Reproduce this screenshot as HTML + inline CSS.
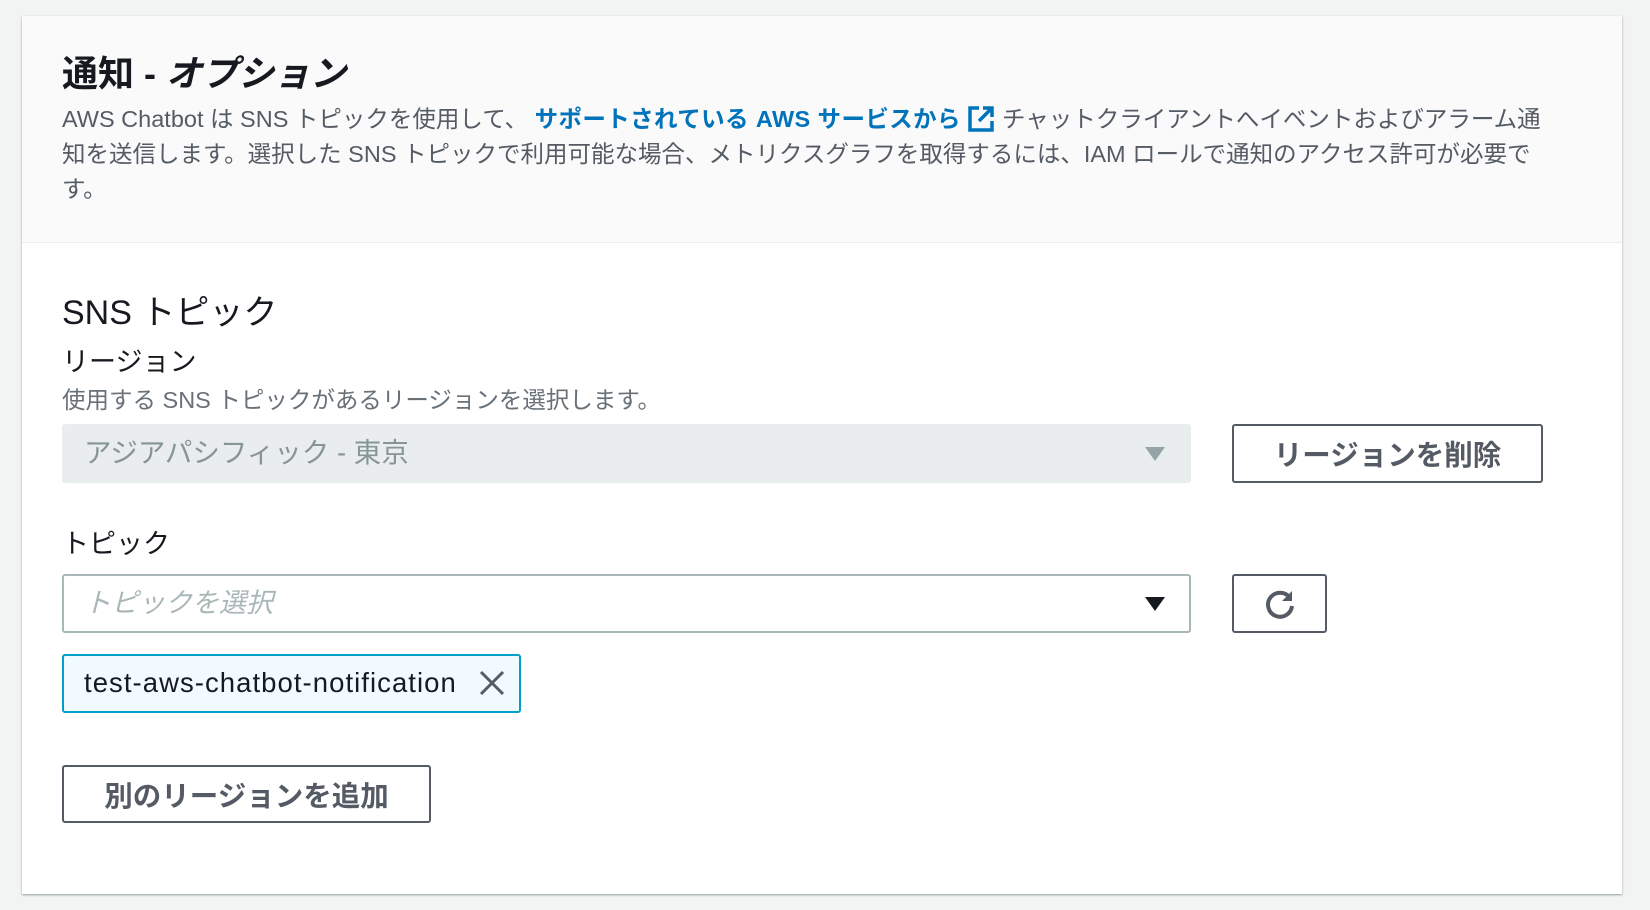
<!DOCTYPE html>
<html><head><meta charset="utf-8"><style>
*{box-sizing:border-box;margin:0;padding:0}
body{width:1650px;height:910px;background:#f2f3f3;font-family:"Liberation Sans","Noto Sans CJK JP",sans-serif;color:#16191f;position:relative;overflow:hidden}
.card{position:absolute;left:22px;top:16px;width:1600px;height:878px;background:#fff;box-shadow:0 1px 2px rgba(0,28,36,.4)}
.hdr{position:absolute;left:0;top:0;width:1600px;height:227px;background:#fafafa;border-bottom:1px solid #eaeded}
.abs{position:absolute;white-space:nowrap}
.btn{position:absolute;border:2px solid #545b64;border-radius:3px;background:#fff;color:#545b64;font-weight:bold;font-size:28.5px;display:flex;align-items:center;justify-content:center}
</style></head><body>
<div class="card">
<div class="hdr">
<div class="abs" style="left:40px;top:35px;font-size:36px;font-weight:bold;line-height:46px">通知 - <i>オプション</i></div>
<div class="abs" style="left:40px;top:86px;width:1488px;white-space:normal;font-size:23.5px;line-height:35px;color:#545b64">AWS Chatbot は SNS トピックを使用して、 <b style="color:#0073bb;letter-spacing:0.4px">サポートされている AWS サービスから</b> <svg width="28" height="28" viewBox="0 0 28 28" style="vertical-align:-6px"><path d="M12 3H3v22h22v-9" fill="none" stroke="#0073bb" stroke-width="3.5"/><path d="M16 3h9v9M25 3L12 16" fill="none" stroke="#0073bb" stroke-width="3.5"/></svg> チャットクライアントへイベントおよびアラーム通知を送信します。選択した SNS トピックで利用可能な場合、メトリクスグラフを取得するには、IAM ロールで通知のアクセス許可が必要です。</div>
</div>
<div class="abs" style="left:40px;top:276px;font-size:34px;line-height:42px">SNS トピック</div>
<div class="abs" style="left:40px;top:329px;font-size:27px;line-height:34px">リージョン</div>
<div class="abs" style="left:40px;top:368px;font-size:23.5px;line-height:32px;color:#687078">使用する SNS トピックがあるリージョンを選択します。</div>
<div class="abs" style="left:40px;top:408px;width:1129px;height:59px;background:#eaeded;border-radius:3px"></div>
<div class="abs" style="left:62px;top:419px;font-size:27.5px;line-height:36px;color:#879596">アジアパシフィック - 東京</div>
<svg class="abs" style="left:1122px;top:430px" width="22" height="16"><path d="M1 1h20L11 15z" fill="#95a5a6"/></svg>
<div class="btn" style="left:1210px;top:408px;width:311px;height:59px">リージョンを削除</div>
<div class="abs" style="left:40px;top:510px;font-size:27px;line-height:36px">トピック</div>
<div class="abs" style="left:40px;top:558px;width:1129px;height:59px;border:2px solid #aab7b8;border-radius:3px;background:#fff"></div>
<div class="abs" style="left:62px;top:569px;font-size:27px;line-height:36px;color:#aab7b8;font-style:italic">トピックを選択</div>
<svg class="abs" style="left:1122px;top:580px" width="22" height="16"><path d="M1 1h20L11 15z" fill="#16191f"/></svg>
<div class="btn" style="left:1210px;top:558px;width:95px;height:59px"><svg width="36" height="36" viewBox="0 0 36 36"><path d="M28 12A12 12 0 1 0 30 20" fill="none" stroke="#545b64" stroke-width="4"/><path d="M30 5v10H20z" fill="#545b64"/></svg></div>
<div class="abs" style="left:40px;top:638px;width:459px;height:59px;background:#f1faff;border:2px solid #00a1c9;border-radius:3px"></div>
<div class="abs" style="left:62px;top:649px;font-size:27.5px;line-height:36px;letter-spacing:1.05px">test-aws-chatbot-notification</div>
<svg class="abs" style="left:456px;top:653px" width="28" height="28"><path d="M3 3L25 25M25 3L3 25" stroke="#545b64" stroke-width="3"/></svg>
<div class="btn" style="left:40px;top:749px;width:369px;height:58px;font-size:28.5px">別のリージョンを追加</div>
</div>
</body></html>
